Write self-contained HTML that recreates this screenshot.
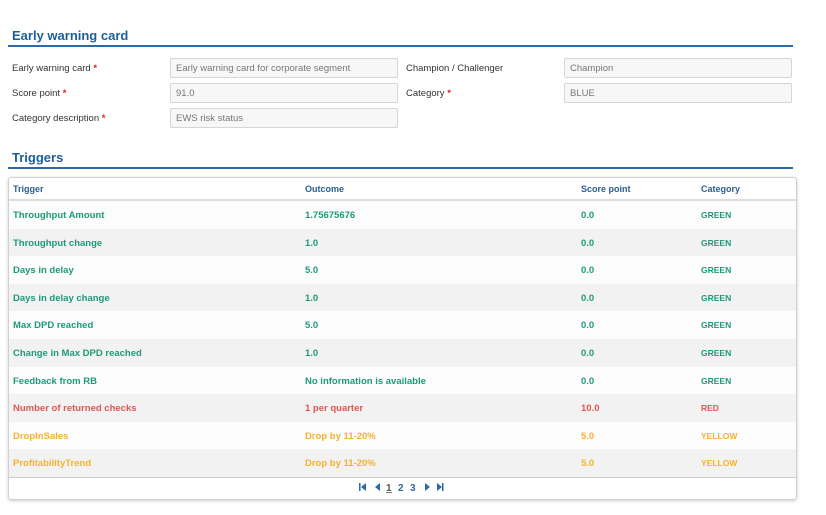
<!DOCTYPE html>
<html><head><style>
*{box-sizing:border-box;margin:0;padding:0}
body{width:826px;height:515px;background:#fff;font-family:"Liberation Sans",sans-serif;position:relative;overflow:hidden;color:#333}
.h{position:absolute;left:12px;font-size:13px;font-weight:bold;color:#1e5f97}
.line{position:absolute;left:8px;width:785px;height:2px;background:#2a6aa8}
.lbl{position:absolute;font-size:9.5px;color:#333}
.lbl b{color:#e02020}
.in{position:absolute;height:20px;border:1px solid #d6d6d6;border-radius:2px;background:#f7f7f7;font-size:9.5px;color:#777;padding:4px 5px;width:228px}
.tbl{position:absolute;left:8px;top:177px;width:789px;height:323px;border:1px solid #d0d0d0;border-radius:3px;box-shadow:0 1px 3px rgba(0,0,0,.2);overflow:hidden}
.row{position:absolute;left:0;width:789px;height:27.6px;font-size:9.5px;font-weight:bold}
.row span{position:absolute;top:9px}
.c1{left:4px}.c2{left:296px}.c3{left:572px}.c4{left:692px;font-size:8.5px}
.g{color:#1d9a78}.r{color:#e05555}.y{color:#f5b12f}
.hd{color:#2a5f8f;height:23px;border-bottom:2px solid #ddd}
.hd span{top:6px;font-size:9px}
.pg{position:absolute;left:352px;top:481px;font-size:10px;font-weight:bold;color:#2a6aa8}
</style></head><body>
<div class="h" style="top:28px">Early warning card</div>
<div class="line" style="top:45px"></div>
<div class="lbl" style="left:12px;top:63px">Early warning card <b>*</b></div>
<div class="lbl" style="left:12px;top:88px">Score point <b>*</b></div>
<div class="lbl" style="left:12px;top:113px">Category description <b>*</b></div>
<div class="in" style="left:170px;top:58px">Early warning card for corporate segment</div>
<div class="in" style="left:170px;top:83px">91.0</div>
<div class="in" style="left:170px;top:108px">EWS risk status</div>
<div class="lbl" style="left:406px;top:63px">Champion / Challenger</div>
<div class="lbl" style="left:406px;top:88px">Category <b>*</b></div>
<div class="in" style="left:564px;top:58px">Champion</div>
<div class="in" style="left:564px;top:83px">BLUE</div>
<div class="h" style="top:150px">Triggers</div>
<div class="line" style="top:167px"></div>
<div class="tbl">
<div class="row hd" style="top:0"><span class="c1">Trigger</span><span class="c2">Outcome</span><span class="c3">Score point</span><span class="c4">Category</span></div>
<div class="row g" style="top:23px;background:#fcfcfc"><span class="c1">Throughput Amount</span><span class="c2">1.75675676</span><span class="c3">0.0</span><span class="c4">GREEN</span></div>
<div class="row g" style="top:50.6px;background:#f2f2f2"><span class="c1">Throughput change</span><span class="c2">1.0</span><span class="c3">0.0</span><span class="c4">GREEN</span></div>
<div class="row g" style="top:78.2px;background:#fcfcfc"><span class="c1">Days in delay</span><span class="c2">5.0</span><span class="c3">0.0</span><span class="c4">GREEN</span></div>
<div class="row g" style="top:105.8px;background:#f2f2f2"><span class="c1">Days in delay change</span><span class="c2">1.0</span><span class="c3">0.0</span><span class="c4">GREEN</span></div>
<div class="row g" style="top:133.4px;background:#fcfcfc"><span class="c1">Max DPD reached</span><span class="c2">5.0</span><span class="c3">0.0</span><span class="c4">GREEN</span></div>
<div class="row g" style="top:161px;background:#f2f2f2"><span class="c1">Change in Max DPD reached</span><span class="c2">1.0</span><span class="c3">0.0</span><span class="c4">GREEN</span></div>
<div class="row g" style="top:188.6px;background:#fcfcfc"><span class="c1">Feedback from RB</span><span class="c2">No information is available</span><span class="c3">0.0</span><span class="c4">GREEN</span></div>
<div class="row r" style="top:216.2px;background:#f2f2f2"><span class="c1">Number of returned checks</span><span class="c2">1 per quarter</span><span class="c3">10.0</span><span class="c4">RED</span></div>
<div class="row y" style="top:243.8px;background:#fcfcfc"><span class="c1">DropInSales</span><span class="c2">Drop by 11-20%</span><span class="c3">5.0</span><span class="c4">YELLOW</span></div>
<div class="row y" style="top:271.4px;background:#f2f2f2;border-bottom:1px solid #ccc;height:29px"><span class="c1">ProfitabilityTrend</span><span class="c2">Drop by 11-20%</span><span class="c3">5.0</span><span class="c4">YELLOW</span></div>
</div>
<div class="pg">
<svg width="94" height="12" viewBox="0 0 94 12" style="vertical-align:middle">
<rect x="7" y="2" width="1.5" height="8" fill="#2a6aa8"/><path d="M14 2 L9 6 L14 10Z" fill="#2a6aa8"/>
<path d="M28 2 L23 6 L28 10Z" fill="#2a6aa8"/>
<text x="34" y="10" font-size="10" font-weight="bold" fill="#555" font-family="Liberation Sans">1</text><rect x="34" y="11" width="6" height="0.8" fill="#555"/>
<text x="46" y="10" font-size="10" font-weight="bold" fill="#2a6aa8" font-family="Liberation Sans">2</text>
<text x="58" y="10" font-size="10" font-weight="bold" fill="#2a6aa8" font-family="Liberation Sans">3</text>
<path d="M73 2 L78 6 L73 10Z" fill="#2a6aa8"/>
<path d="M85 2 L90 6 L85 10Z" fill="#2a6aa8"/><rect x="90" y="2" width="1.5" height="8" fill="#2a6aa8"/>
</svg></div>
</body></html>
